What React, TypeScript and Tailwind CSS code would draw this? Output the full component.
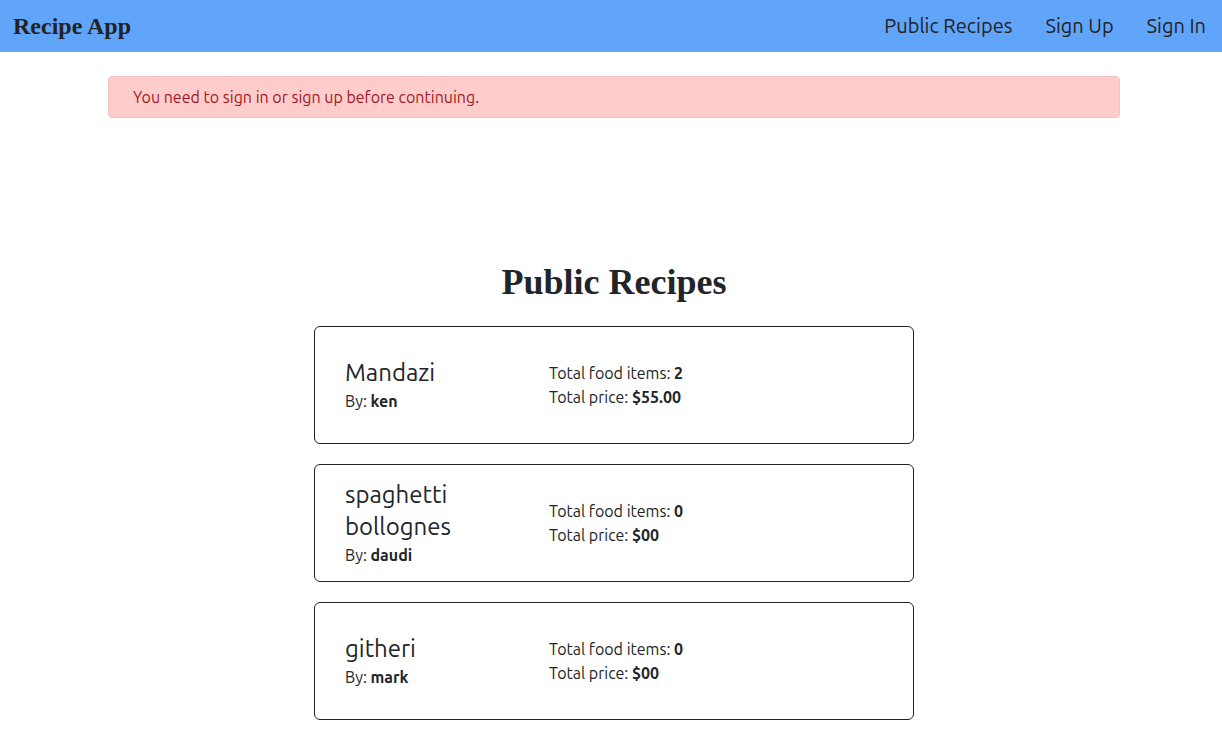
import React from "react";

interface Recipe {
  name: string;
  author: string;
  items: number;
  price: string;
}

const recipes: Recipe[] = [
  { name: "Mandazi", author: "ken", items: 2, price: "$55.00" },
  { name: "spaghetti bollognes", author: "daudi", items: 0, price: "$00" },
  { name: "githeri", author: "mark", items: 0, price: "$00" },
];

const sans = "font-['Ubuntu','Open_Sans','Noto_Sans',sans-serif]";

const RecipeCard: React.FC<{ recipe: Recipe }> = ({ recipe }) => (
  <div className="flex items-center h-[118px] border border-[#222] rounded-md px-[30px]">
    <div className="w-[204px] shrink-0">
      <h3 className="text-2xl leading-8 w-[150px]">{recipe.name}</h3>
      <p className="text-base leading-6">
        By: <span className="font-bold">{recipe.author}</span>
      </p>
    </div>
    <div className="text-base leading-6">
      <p>
        Total food items: <span className="font-bold">{recipe.items}</span>
      </p>
      <p>
        Total price: <span className="font-bold">{recipe.price}</span>
      </p>
    </div>
  </div>
);

const App: React.FC = () => {
  return (
    <div className={`min-h-screen bg-white text-[#212529] ${sans}`}>
      <nav className="h-[52px] bg-[#60a5fa] flex items-center justify-between pl-[13px] pr-4">
        <a className="font-['Liberation_Serif',serif] font-bold text-2xl text-[#222]">Recipe App</a>
        <div className="flex items-center gap-[33px] text-xl text-[#222]">
          <a>Public Recipes</a>
          <a>Sign Up</a>
          <a>Sign In</a>
        </div>
      </nav>

      <div className="pl-[6px]">
        <div className="mx-auto mt-6 w-[1012px] h-[42px] flex items-center px-6 bg-[#ffcccc] border border-[#f0c4c4] rounded text-base text-[#a3191f]">
          You need to sign in or sign up before continuing.
        </div>

        <main className="flex flex-col items-center pt-[144px]">
          <h1 className="font-['Liberation_Serif',serif] font-bold text-4xl mb-6">Public Recipes</h1>
          <div className="flex flex-col gap-5 w-[600px]">
            {recipes.map((r) => (
              <RecipeCard key={r.name} recipe={r} />
            ))}
          </div>
        </main>
      </div>
    </div>
  );
};

export default App;
